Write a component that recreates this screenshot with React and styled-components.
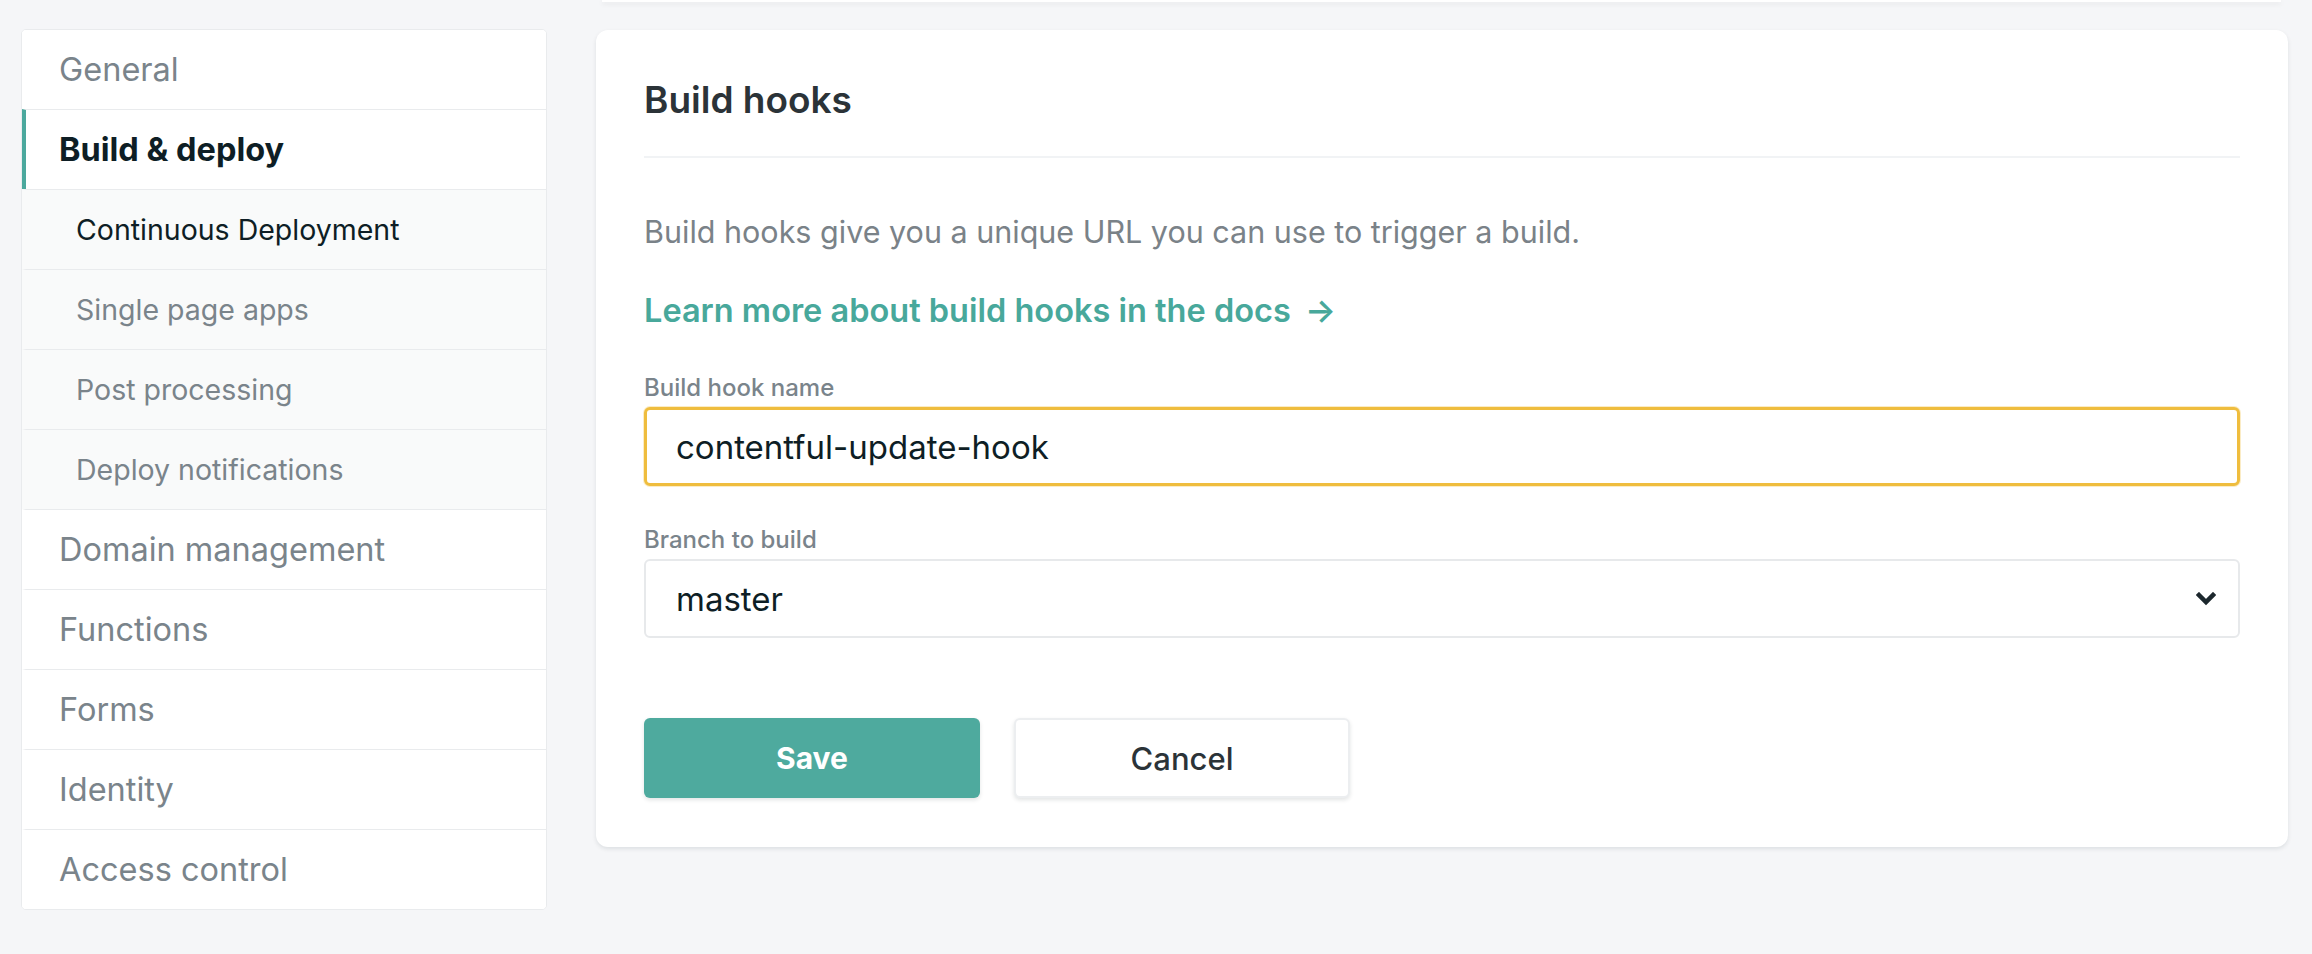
import styled, { createGlobalStyle } from 'styled-components'

const GlobalStyle = createGlobalStyle`
* { box-sizing: border-box; }
html, body {
  margin: 0;
  padding: 0;
  background: #f5f6f8;
  font-family: Inter, "Noto Sans", "Liberation Sans", sans-serif;
}
`

const menu = [
    { label: 'General' },
    { label: 'Build & deploy', active: true },
    { label: 'Continuous Deployment', sub: true, current: true },
    { label: 'Single page apps', sub: true },
    { label: 'Post processing', sub: true },
    { label: 'Deploy notifications', sub: true },
    { label: 'Domain management' },
    { label: 'Functions' },
    { label: 'Forms' },
    { label: 'Identity' },
    { label: 'Access control' },
]

const App = () => {
    return <Page>
        <GlobalStyle />
        <Sidebar>
            {menu.map(item => (
                <NavItem key={item.label} $sub={item.sub} $active={item.active} $current={item.current}>
                    {item.label}
                </NavItem>
            ))}
        </Sidebar>
        <Main>
            <PrevCard />
            <Card>
                <CardHeader>Build hooks</CardHeader>
                <Description>Build hooks give you a unique URL you can use to trigger a build.</Description>
                <DocsLink href="#">Learn more about build hooks in the docs <Arrow>→</Arrow></DocsLink>
                <Field>
                    <Label>Build hook name</Label>
                    <TextInput defaultValue="contentful-update-hook" />
                </Field>
                <Field>
                    <Label>Branch to build</Label>
                    <SelectBox>
                        <span>master</span>
                        <svg width="20" height="14" viewBox="0 0 20 14">
                            <polyline points="3,3 10,10 17,3" fill="none" stroke="#1c272d" strokeWidth="4.5" strokeLinecap="square" />
                        </svg>
                    </SelectBox>
                </Field>
                <Actions>
                    <Button $primary>Save</Button>
                    <Button>Cancel</Button>
                </Actions>
            </Card>
        </Main>
    </Page>
}

const Page = styled.div`
display: flex;
align-items: flex-start;
gap: 49px;
padding: 0 24px 0 21px;
min-height: 954px;
`

const Sidebar = styled.nav`
width: 526px;
flex-shrink: 0;
margin-top: 29px;
background: #fff;
border: 1px solid #e9ebed;
border-radius: 5px;
overflow: hidden;
`

const NavItem = styled.div`
height: 80px;
display: flex;
align-items: center;
padding-left: ${p => p.$sub ? '50px' : '33px'};
border-top: 1px solid #e9ebed;
border-left: 4px solid ${p => p.$active ? '#4ba89d' : 'transparent'};
background: ${p => p.$sub ? '#f9fafa' : '#fff'};
font-size: ${p => p.$sub ? '28.5px' : '32.5px'};
font-weight: ${p => p.$active ? 700 : 400};
color: ${p => (p.$active || p.$current) ? '#0e1e25' : '#7a848b'};
&:first-child {
  border-top: none;
  height: 79px;
}
`

const Main = styled.div`
flex: 1;
display: flex;
flex-direction: column;
`

const PrevCard = styled.div`
height: 2px;
margin: 0 7px 0 6px;
background: #fff;
box-shadow: 0 2px 5px rgba(0, 0, 0, 0.09);
`

const Card = styled.section`
margin-top: 28px;
background: #fff;
border-radius: 12px;
box-shadow: 0 2px 4px rgba(14, 30, 37, 0.1);
padding: 48px 48px 49px;
display: flex;
flex-direction: column;
`

const CardHeader = styled.h2`
margin: 0;
padding: 0 0 34px;
font-size: 37px;
line-height: 44px;
font-weight: 600;
color: #2b3338;
border-bottom: 2px solid #f1f3f5;
`

const Description = styled.p`
margin: 52px 0 0;
font-size: 30.5px;
line-height: 44px;
color: #7a8288;
`

const DocsLink = styled.a`
margin-top: 35px;
font-size: 32.5px;
line-height: 44px;
font-weight: 600;
color: #48a89b;
text-decoration: none;
`

const Arrow = styled.span`
margin-left: 6px;
`

const Field = styled.div`
margin-top: 38px;
display: flex;
flex-direction: column;
& + & {
  margin-top: 37px;
}
`

const Label = styled.label`
font-size: 24px;
line-height: 34px;
font-weight: 500;
color: #7a848b;
margin-bottom: 2px;
`

const TextInput = styled.input`
height: 79px;
border: 3px solid #efbd3e;
border-radius: 6px;
box-shadow: 0 0 0 1px #fbecc6;
padding: 0 29px;
font-family: inherit;
font-size: 33px;
color: #0e1e25;
outline: none;
`

const SelectBox = styled.div`
height: 79px;
border: 2px solid #e7e9eb;
border-radius: 6px;
padding: 0 22px 0 30px;
display: flex;
align-items: center;
justify-content: space-between;
font-size: 33px;
color: #0e1e25;
`

const Actions = styled.div`
margin-top: 80px;
display: flex;
gap: 34px;
`

const Button = styled.button`
width: 336px;
height: 80px;
border-radius: 6px;
font-family: inherit;
font-size: ${p => p.$primary ? '30px' : '31px'};
font-weight: ${p => p.$primary ? 700 : 500};
color: ${p => p.$primary ? '#fff' : '#2b3338'};
background: ${p => p.$primary ? '#4eaa9e' : '#fff'};
border: ${p => p.$primary ? 'none' : '2px solid #eceef0'};
box-shadow: 0 2px 4px rgba(14, 30, 37, 0.12);
cursor: pointer;
`

export default App
